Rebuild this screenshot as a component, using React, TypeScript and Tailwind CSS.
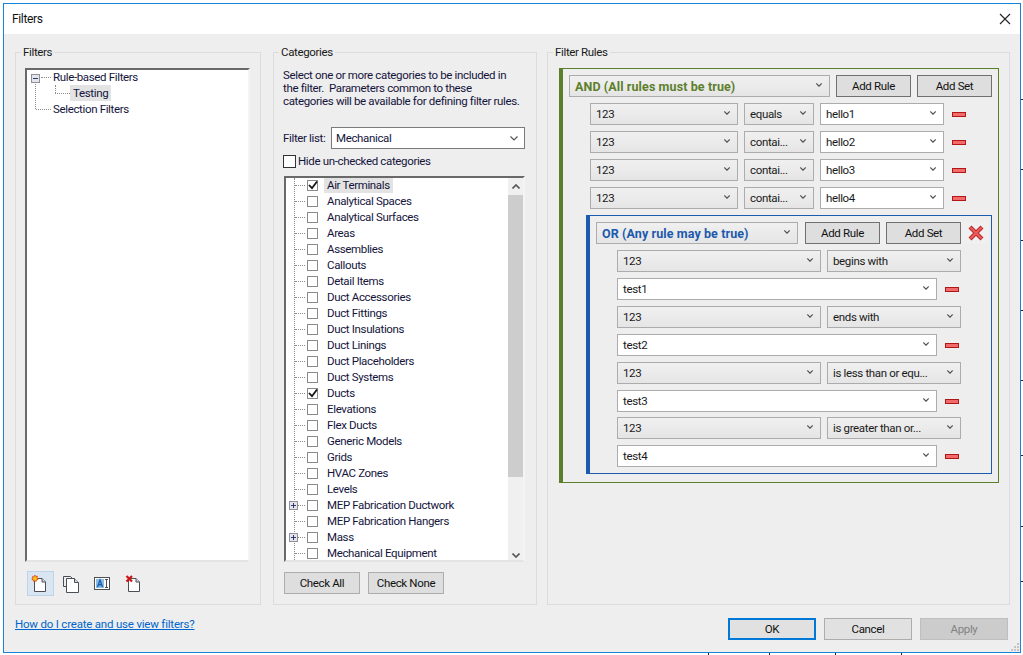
import type { ReactNode } from "react";

const categories: { name: string; checked?: boolean; plus?: boolean; selected?: boolean }[] = [
  { name: "Air Terminals", checked: true, selected: true },
  { name: "Analytical Spaces" },
  { name: "Analytical Surfaces" },
  { name: "Areas" },
  { name: "Assemblies" },
  { name: "Callouts" },
  { name: "Detail Items" },
  { name: "Duct Accessories" },
  { name: "Duct Fittings" },
  { name: "Duct Insulations" },
  { name: "Duct Linings" },
  { name: "Duct Placeholders" },
  { name: "Duct Systems" },
  { name: "Ducts", checked: true },
  { name: "Elevations" },
  { name: "Flex Ducts" },
  { name: "Generic Models" },
  { name: "Grids" },
  { name: "HVAC Zones" },
  { name: "Levels" },
  { name: "MEP Fabrication Ductwork", plus: true },
  { name: "MEP Fabrication Hangers" },
  { name: "Mass", plus: true },
  { name: "Mechanical Equipment" },
];

const ticksRight = [99, 169, 240, 310, 380, 455, 526, 581];
const ticksBottom = [708, 769, 835, 901];

function Chevron() {
  return (
    <svg width="8" height="5" viewBox="0 0 8 5" className="shrink-0">
      <path d="M0.5 0.5 L4 4 L7.5 0.5" fill="none" stroke="#555" strokeWidth="1.2" />
    </svg>
  );
}

function SmallChevron() {
  return (
    <svg width="6" height="4" viewBox="0 0 6 4" className="shrink-0 -mt-[2px]">
      <path d="M0.3 0.5 L3 3.2 L5.7 0.5" fill="none" stroke="#555" strokeWidth="1.2" />
    </svg>
  );
}

function Combo({ width, white, children }: { width: string; white?: boolean; children: ReactNode }) {
  return (
    <div
      className={`${width} h-[22px] shrink-0 flex items-center justify-between pl-[5px] pr-[7px] border border-[#acacac] ${
        white ? "bg-white" : "bg-gradient-to-b from-[#f0f0f0] to-[#e5e5e5]"
      }`}
    >
      <span className="pt-px whitespace-nowrap text-[#1a1a1a]">{children}</span>
      <SmallChevron />
    </div>
  );
}

function Btn({ children, className = "" }: { children: ReactNode; className?: string }) {
  return (
    <div className={`h-[22px] shrink-0 flex items-center justify-center border bg-[#dedede] text-[#111] ${className}`}>
      {children}
    </div>
  );
}

function Minus({ className = "" }: { className?: string }) {
  return <div className={`w-[14px] h-[5px] shrink-0 border border-[#b01818] bg-[#f26a6a] ${className}`} />;
}

function Group({ title, className, children }: { title: string; className: string; children: ReactNode }) {
  return (
    <div className={`relative h-[553px] shrink-0 border border-[#dcdcdc] ${className}`}>
      <span className="absolute -top-[9px] left-[5px] px-[2px] bg-[#eeeeee] leading-[16px] text-[#1a1a1a]">{title}</span>
      {children}
    </div>
  );
}

function Rule({ field, op, value }: { field: string; op: string; value: string }) {
  return (
    <div className="flex items-center gap-[6px] ml-[27px]">
      <Combo width="w-[148px]">{field}</Combo>
      <Combo width="w-[70px]">{op}</Combo>
      <Combo width="w-[124px]" white>{value}</Combo>
      <Minus className="ml-[2px]" />
    </div>
  );
}

function OrRule({ op, value, className = "mt-[6px]" }: { op: string; value: string; className?: string }) {
  return (
    <div className={className}>
      <div className="flex gap-[6px]">
        <Combo width="w-[204px]">123</Combo>
        <Combo width="w-[134px]">{op}</Combo>
      </div>
      <div className="flex items-center gap-[8px] mt-[6px]">
        <Combo width="w-[320px]" white>{value}</Combo>
        <Minus />
      </div>
    </div>
  );
}

function Sheet() {
  return (
    <g>
      <path d="M3.5 6.5 H11 L14.5 10 V19.5 H3.5 Z" fill="#fff" stroke="#4a4f55" strokeWidth="1" />
      <path d="M11 6.5 V10 H14.5" fill="#d5d8dc" stroke="#4a4f55" strokeWidth="1" />
    </g>
  );
}

function NewIcon() {
  return (
    <svg width="20" height="24" viewBox="0 0 20 24" className="h-[24px] w-[20px]">
      <Sheet />
      <circle cx="4" cy="6.5" r="2.6" fill="#f5c518" stroke="#e2501c" strokeWidth="1.6" strokeDasharray="1.5 0.7" />
    </svg>
  );
}

function CopyIcon() {
  return (
    <svg width="18" height="18" viewBox="0 0 18 18" className="h-[18px] w-[18px]">
      <path d="M4 11.5 H1.5 V1.5 H8.5 L10 3" fill="none" stroke="#4a4f55" strokeWidth="1" />
      <path d="M4.5 3.5 H12.5 L16.5 7.5 V17.5 H4.5 Z" fill="#fff" stroke="#4a4f55" strokeWidth="1" />
      <path d="M12.5 3.5 V7.5 H16.5" fill="#d5d8dc" stroke="#4a4f55" strokeWidth="1" />
    </svg>
  );
}

function RenameIcon() {
  return (
    <svg width="16" height="13" viewBox="0 0 16 13" className="h-[13px] w-[16px]">
      <rect x="0.5" y="0.5" width="15" height="12" fill="#fff" stroke="#4a4f55" />
      <rect x="2" y="2" width="8" height="9" fill="#8dbbe6" />
      <path d="M3.5 10 L6 3 L8.5 10 M4.5 7.8 H7.5" fill="none" stroke="#1a62b0" strokeWidth="1.4" />
      <path d="M11 2.5 H14 M12.5 2.5 V10.5 M11 10.5 H14" fill="none" stroke="#4a4f55" strokeWidth="1" />
    </svg>
  );
}

function DeleteIcon() {
  return (
    <svg width="20" height="24" viewBox="0 0 20 24" className="h-[24px] w-[20px]">
      <Sheet />
      <path d="M1.5 4 L7 9.5 M7 4 L1.5 9.5" stroke="#cc1616" strokeWidth="2.2" />
    </svg>
  );
}

function CategoryRow({ name, checked, plus, selected }: (typeof categories)[number]) {
  return (
    <div className="relative h-[16px] flex items-center pl-[9px]">
      <span className="w-[10px] shrink-0 border-t border-dotted border-[#8c8c8c]" />
      {plus && (
        <span className="absolute left-[3px] top-[4px] w-[9px] h-[9px] border border-[#8e8f9a] bg-[#e4e4ea] flex items-center justify-center">
          <svg width="5" height="5" viewBox="0 0 5 5">
            <path d="M0 2.5 H5 M2.5 0 V5" stroke="#2c3a70" strokeWidth="1" />
          </svg>
        </span>
      )}
      <span className="ml-[2px] w-[11px] h-[11px] shrink-0 border border-[#8a8a8a] bg-white flex items-center justify-center">
        {checked && (
          <svg width="10" height="10" viewBox="0 0 10 10" className="shrink-0">
            <path d="M1 5 L4 8.2 L9 1.5" fill="none" stroke="#111" strokeWidth="1.8" />
          </svg>
        )}
      </span>
      <span className={`ml-[6px] pl-[3px] pr-[3px] leading-[16px] whitespace-nowrap text-[#14143c] ${selected ? "bg-[#e3e3e3]" : ""}`}>
        {name}
      </span>
    </div>
  );
}

export default function App() {
  return (
    <div
      className="relative w-[1023px] h-[655px] overflow-hidden bg-white pl-[3px] pt-[3px] text-[11.5px] leading-[13px] tracking-[-0.35px]"
      style={{ fontFamily: 'Roboto, "Liberation Sans", sans-serif' }}
    >
      {ticksRight.map((y) => (
        <div key={y} className="absolute right-0 w-[2px] h-px bg-[#222]" style={{ top: y }} />
      ))}
      {ticksBottom.map((x) => (
        <div key={x} className="absolute bottom-0 w-px h-[2px] bg-[#222]" style={{ left: x }} />
      ))}

      <div className="relative w-[1018px] h-[650px] border border-[#1883d7] bg-[#eeeeee] flex flex-col">
        <div className="h-[30px] shrink-0 bg-white flex items-center justify-between pl-[8px] pr-[9px] text-[12px] text-[#111]">
          <span>Filters</span>
          <svg width="12" height="12" viewBox="0 0 12 12">
            <path d="M1 1 L11 11 M11 1 L1 11" stroke="#222" strokeWidth="1.1" />
          </svg>
        </div>

        <div className="flex pl-[11px] pt-[18px]">
          <Group title="Filters" className="w-[246px] pl-[9px] pt-[15px]">
            <div className="relative w-[225px] h-[494px] bg-white border-2 border-t-[#696969] border-l-[#696969] border-r-[#f4f4f4] border-b-[#e4e4e4]">
              <span className="absolute left-[8px] top-[12px] h-[27px] border-l border-dotted border-[#8c8c8c]" />
              <span className="absolute left-[4px] top-[4px] w-[9px] h-[9px] border border-[#8e8f9a] bg-[#e4e4ea] flex items-center justify-center">
                <svg width="5" height="1" viewBox="0 0 5 1">
                  <path d="M0 0.5 H5" stroke="#2c3a70" strokeWidth="1" />
                </svg>
              </span>
              <div className="-mt-px">
                <div className="h-[16px] flex items-center pl-[14px]">
                  <span className="w-[10px] border-t border-dotted border-[#8c8c8c]" />
                  <span className="ml-[2px] text-[#14143c] whitespace-nowrap">Rule-based Filters</span>
                </div>
                <div className="relative h-[16px] flex items-center pl-[28px]">
                  <span className="absolute left-[28px] top-0 h-[8px] border-l border-dotted border-[#8c8c8c]" />
                  <span className="w-[15px] border-t border-dotted border-[#8c8c8c]" />
                  <span className="px-[3px] bg-[#e3e3e3] leading-[16px] text-[#14143c]">Testing</span>
                </div>
                <div className="h-[16px] flex items-center pl-[9px]">
                  <span className="w-[15px] border-t border-dotted border-[#8c8c8c]" />
                  <span className="ml-[2px] text-[#14143c] whitespace-nowrap">Selection Filters</span>
                </div>
              </div>
            </div>
            <div className="flex items-center ml-[2px] mt-[9px] h-[25px]">
              <div className="w-[27px] h-[25px] border border-[#bcd5ea] bg-[#d9e6f1] flex items-center justify-center">
                <NewIcon />
              </div>
              <div className="ml-[8px] w-[18px] flex justify-center"><CopyIcon /></div>
              <div className="ml-[14px] w-[16px] flex justify-center"><RenameIcon /></div>
              <div className="ml-[15px] w-[20px] flex justify-center"><DeleteIcon /></div>
            </div>
          </Group>

          <Group title="Categories" className="w-[264px] ml-[12px] pl-[9px] pt-[16px]">
            <p className="leading-[13px] whitespace-nowrap text-[#14143c]">
              Select one or more categories to be included in
              <br />
              the filter.&nbsp; Parameters common to these
              <br />
              categories will be available for defining filter rules.
            </p>
            <div className="flex items-center mt-[19px] h-[22px]">
              <span className="w-[48px] whitespace-nowrap text-[#14143c]">Filter list:</span>
              <div className="w-[194px] h-[22px] flex items-center justify-between pl-[4px] pr-[6px] border border-[#7a7a7a] bg-white">
                <span className="text-[#14143c]">Mechanical</span>
                <Chevron />
              </div>
            </div>
            <div className="flex items-center mt-[6px] h-[13px]">
              <span className="w-[13px] h-[13px] border border-[#333] bg-white" />
              <span className="ml-[2px] text-[#14143c]">Hide un-checked categories</span>
            </div>
            <div className="relative flex ml-[1px] mt-[8px] w-[241px] h-[386px] bg-white border-2 border-t-[#696969] border-l-[#696969] border-r-[#f4f4f4] border-b-[#e4e4e4] overflow-hidden">
              <div className="flex-1 -mt-px">
                <span className="absolute left-[8px] top-0 h-full border-l border-dotted border-[#8c8c8c]" />
                {categories.map((c) => (
                  <CategoryRow key={c.name} {...c} />
                ))}
              </div>
              <div className="w-[15px] shrink-0 flex flex-col bg-[#f0f0f0]">
                <div className="h-[17px] flex items-center justify-center">
                  <svg width="8" height="5" viewBox="0 0 8 5">
                    <path d="M0.5 4.5 L4 1 L7.5 4.5" fill="none" stroke="#555" strokeWidth="1.6" />
                  </svg>
                </div>
                <div className="h-[282px] bg-[#cdcdcd]" />
                <div className="flex-1" />
                <div className="h-[10px] flex items-center justify-center">
                  <svg width="8" height="5" viewBox="0 0 8 5">
                    <path d="M0.5 0.5 L4 4 L7.5 0.5" fill="none" stroke="#555" strokeWidth="1.6" />
                  </svg>
                </div>
              </div>
            </div>
            <div className="flex gap-[8px] ml-[1px] mt-[10px]">
              <Btn className="w-[76px] border-[#adadad]">Check All</Btn>
              <Btn className="w-[76px] border-[#adadad]">Check None</Btn>
            </div>
          </Group>

          <Group title="Filter Rules" className="w-[463px] ml-[10px] pl-[11px] pt-[15px]">
            <div className="w-[440px] h-[415px] border border-l-4 border-[#5c7f2c] pt-[6px]">
              <div className="flex gap-[6px] ml-[3px] pl-[3px] w-[429px] bg-[#f0f0f0]">
                <Combo width="w-[261px]">
                  <span className="font-bold text-[#5c7f2c] text-[12.5px] tracking-[0.1px]">AND (All rules must be true)</span>
                </Combo>
                <Btn className="w-[75px] border-[#707070]">Add Rule</Btn>
                <Btn className="w-[75px] border-[#707070]">Add Set</Btn>
              </div>
              <div className="flex flex-col gap-[6px] mt-[6px]">
                <Rule field="123" op="equals" value="hello1" />
                <Rule field="123" op="contai..." value="hello2" />
                <Rule field="123" op="contai..." value="hello3" />
                <Rule field="123" op="contai..." value="hello4" />
              </div>
              <div className="w-[406px] h-[259px] ml-[23px] mt-[6px] border border-l-4 border-[#1c5aad] pt-[6px]">
                <div className="flex items-center ml-[3px] pl-[3px] w-[395px] bg-[#f0f0f0]">
                  <Combo width="w-[202px]">
                    <span className="font-bold text-[#1c5aad] text-[12.5px] tracking-[0.1px]">OR (Any rule may be true)</span>
                  </Combo>
                  <Btn className="w-[75px] ml-[7px] border-[#707070]">Add Rule</Btn>
                  <Btn className="w-[75px] ml-[6px] border-[#707070]">Add Set</Btn>
                  <svg width="16" height="16" viewBox="0 0 16 16" className="ml-[7px]">
                    <path d="M2 2 L14 14 M14 2 L2 14" stroke="#b92a2a" strokeWidth="4.2" />
                    <path d="M2.5 2.5 L13.5 13.5 M13.5 2.5 L2.5 13.5" stroke="#ef5b5b" strokeWidth="2" />
                  </svg>
                </div>
                <div className="ml-[27px] mt-[6px]">
                  <OrRule op="begins with" value="test1" className="" />
                  <OrRule op="ends with" value="test2" />
                  <OrRule op="is less than or equ..." value="test3" />
                  <OrRule op="is greater than or..." value="test4" className="mt-[5px]" />
                </div>
              </div>
            </div>
          </Group>
        </div>

        <div className="flex items-start pl-[11px] pt-[13px]">
          <span className="text-[#0066cc] underline whitespace-nowrap tracking-[-0.2px]">How do I create and use view filters?</span>
          <div className="ml-auto mr-[12px] flex gap-[8px]">
            <Btn className="w-[88px] border-2 border-[#0078d7] bg-[#e1e1e1]">OK</Btn>
            <Btn className="w-[88px] border-[#adadad] bg-[#e1e1e1]">Cancel</Btn>
            <Btn className="w-[88px] border-[#bfbfbf] !bg-[#cccccc] !text-[#838383]">Apply</Btn>
          </div>
        </div>

        <svg width="10" height="10" viewBox="0 0 10 10" className="absolute right-0 bottom-0">
          <path d="M7 1h2v2H7zM4 4h2v2H4zM7 4h2v2H7zM1 7h2v2H1zM4 7h2v2H4zM7 7h2v2H7z" fill="#c4c4c4" />
        </svg>
      </div>
    </div>
  );
}
